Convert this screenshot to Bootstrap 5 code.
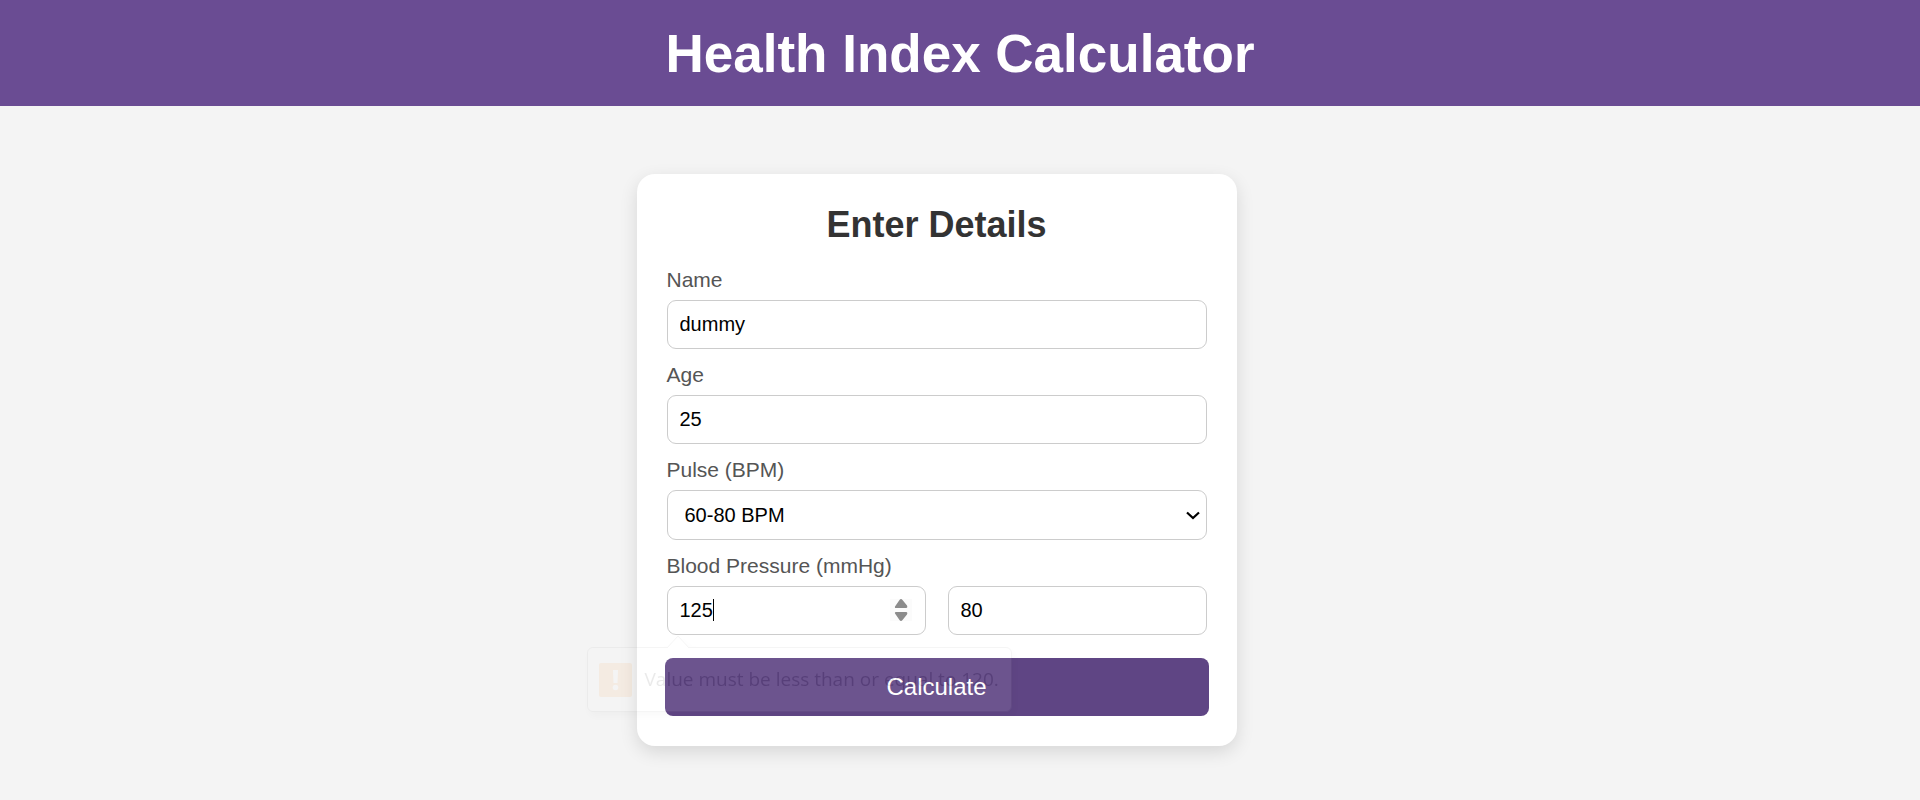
<!DOCTYPE html>
<html lang="en">
<head>
<meta charset="utf-8">
<meta name="viewport" content="width=device-width, initial-scale=1">
<title>Health Index Calculator</title>
<link href="https://cdn.jsdelivr.net/npm/bootstrap@5.3.0/dist/css/bootstrap.min.css" rel="stylesheet">
<style>
body { font-family: "Liberation Sans", Arial, sans-serif; background: #f4f4f4; }
.site-header { background: #6a4c93; padding: 23px 16px 21px; }
.site-header h1 { font-size: 53px; line-height: 62px; }
.page-main { padding: 68px 47px 53px 0; }
.details-card { max-width: 600px; padding: 30px; border: 0; border-radius: 18px; box-shadow: 0 6px 18px rgba(0,0,0,.12); }
.details-card h2 { font-size: 36px; line-height: 41px; margin-bottom: 23px; color: #333; }
.field-label { display: block; font-size: 21px; line-height: 24px; margin-bottom: 8px; color: #555; }
.field-box { margin-bottom: 14px; }
.field-box .form-control, .field-box .form-select { font-size: 20px; line-height: 23px; padding: 12px; border: 1px solid #ccc; border-radius: 9px; color: #000; background-color: #fff; }
.field-box .form-select { height: 50px; padding-left: 17px; background-image: url("data:image/svg+xml,%3Csvg xmlns='http://www.w3.org/2000/svg' viewBox='0 0 14 9'%3E%3Cpath d='M1 1.5l6 5.5 6-5.5' fill='none' stroke='%23000' stroke-width='2.2'/%3E%3C/svg%3E"); background-size: 14px 9px; background-position: right 6px center; }
input[type=number] { -moz-appearance: textfield; appearance: textfield; }
input[type=number]::-webkit-inner-spin-button { -webkit-appearance: none; margin: 0; }
.pressure-row { gap: 22px; margin-bottom: 23px; }
.text-caret { left: 46px; top: 13px; width: 1px; height: 22px; background: #000; }
.stepper { right: 14px; top: 13px; width: 22px; height: 22px; background: #fbfbfb; }
.btn-calc, .btn-calc:hover { background: #5f4584; color: #fff; font-size: 24px; line-height: 28px; padding: 15px; border: 0; border-radius: 8px; margin: 0 -2px; }
.hint { left: -80px; top: 61px; width: 425px; height: 65px; z-index: 2; opacity: .08; filter: drop-shadow(2px 4px 4px rgba(0,0,0,.3)); pointer-events: none; }
.hint-body { border: 1px solid #888; border-radius: 6px; background: #fff; padding: 0 11px; gap: 13px; font-family: "Open Sans", sans-serif; font-size: 19px; color: #000; white-space: nowrap; }
.hint-arrow { left: 79px; top: -12px; }
</style>
</head>
<body>
<header class="site-header text-center text-white">
  <h1 class="fw-bold mb-0">Health Index Calculator</h1>
</header>
<main class="page-main d-flex justify-content-center">
  <form class="details-card card w-100">
    <h2 class="fw-bold text-center">Enter Details</h2>
    <div class="field-box">
      <label class="field-label" for="name">Name</label>
      <input class="form-control" id="name" type="text" value="dummy">
    </div>
    <div class="field-box">
      <label class="field-label" for="age">Age</label>
      <input class="form-control" id="age" type="number" value="25">
    </div>
    <div class="field-box">
      <label class="field-label" for="pulse">Pulse (BPM)</label>
      <select class="form-select" id="pulse"><option>60-80 BPM</option></select>
    </div>
    <label class="field-label" for="systolic">Blood Pressure (mmHg)</label>
    <div class="pressure-row field-box d-flex">
      <div class="position-relative flex-fill w-50">
        <input class="form-control" id="systolic" type="number" value="125">
        <span class="text-caret position-absolute"></span>
        <svg class="stepper position-absolute" viewBox="0 0 22 22" aria-hidden="true"><path d="M5 7.500L9.500 1Q11-1 12.500 1L17 6.500Q18 9 16 9H6Q4.500 9 5 7.500zM5 14.500Q4.500 13 6 13H16Q18 13 17 15.500L12.500 21Q11 23 9.500 21z" fill="#8b8b8b"/></svg>
        <div class="hint position-absolute" role="alert">
          <div class="hint-body d-flex align-items-center h-100">
            <svg class="flex-shrink-0" width="33" height="34" viewBox="0 0 33 34" aria-hidden="true"><rect width="33" height="34" rx="2" fill="#ff8c1a"/><path d="M14 7h5l-.5 13h-4z" fill="#fff"/><circle cx="16.500" cy="24.500" r="2.800" fill="#fff"/></svg>
            <span>Value must be less than or equal to 120.</span>
          </div>
          <svg class="hint-arrow position-absolute" width="24" height="13" viewBox="0 0 24 13" aria-hidden="true"><path d="M1 13L12 1l11 12" fill="#fff" stroke="#888"/></svg>
        </div>
      </div>
      <div class="flex-fill w-50">
        <input class="form-control" id="diastolic" type="number" value="80" aria-label="Diastolic pressure">
      </div>
    </div>
    <button class="btn btn-calc" type="button">Calculate</button>
  </form>
</main>
<script src="https://cdn.jsdelivr.net/npm/bootstrap@5.3.0/dist/js/bootstrap.bundle.min.js"></script>
</body>
</html>
